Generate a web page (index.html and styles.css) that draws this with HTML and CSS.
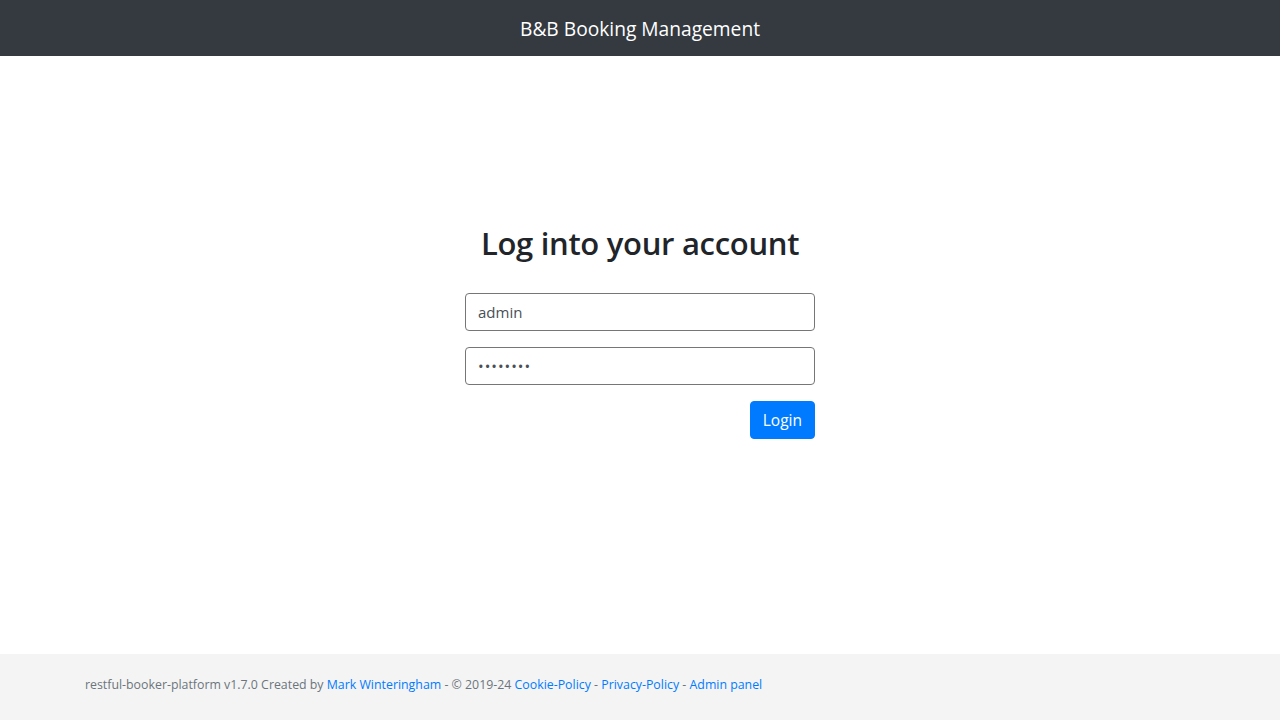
FILE: index.html
```html
<!DOCTYPE html>
<html lang="en">
<head>
<meta charset="utf-8">
<title>B&amp;B Booking Management</title>
<link rel="stylesheet" href="styles.css">
</head>
<body>
<nav class="navbar">
  <span class="brand">B&amp;B Booking Management</span>
</nav>
<main class="main">
  <div class="login">
    <h2 class="login-title">Log into your account</h2>
    <form class="login-form">
      <input class="field" type="text" value="admin" placeholder="Username">
      <input class="field field-password" type="password" value="password" placeholder="Password">
      <div class="actions">
        <button class="btn" type="button">Login</button>
      </div>
    </form>
  </div>
</main>
<footer class="footer">
  <div class="footer-inner">
    <p class="footer-text">restful-booker-platform v1.7.0 Created by <a href="#">Mark Winteringham</a> - © 2019-24 <a href="#">Cookie-Policy</a> - <a href="#">Privacy-Policy</a> - <a href="#">Admin panel</a></p>
  </div>
</footer>
</body>
</html>
```

FILE: styles.css
```css
* { box-sizing: border-box; }
html, body { margin: 0; padding: 0; }
body {
  font-family: "Open Sans", "Noto Sans", "Liberation Sans", sans-serif;
  color: #212529;
  background: #fff;
  min-height: 100vh;
  display: flex;
  flex-direction: column;
}
.navbar {
  height: 56px;
  background: #343a40;
  display: flex;
  align-items: center;
  justify-content: center;
}
.brand {
  color: #fff;
  font-size: 19.2px;
}
.main {
  flex: 1;
  display: flex;
  justify-content: center;
}
.login {
  width: 350px;
  margin-top: 169px;
}
.login-title {
  margin: 0 0 31px;
  text-align: center;
  font-size: 31px;
  font-weight: 600;
  line-height: 1.2;
  letter-spacing: -0.3px;
}
.login-form {
  display: flex;
  flex-direction: column;
  gap: 16px;
}
.field {
  height: 38px;
  width: 100%;
  padding: 6px 12px;
  border: 1px solid #767676;
  border-radius: 4px;
  font-family: inherit;
  font-size: 15px;
  color: #495057;
  background: #fff;
}
.field-password {
  letter-spacing: 1px;
}
.actions {
  display: flex;
  justify-content: flex-end;
}
.btn {
  height: 38px;
  padding: 6px 12px;
  border: 1px solid #007bff;
  border-radius: 4px;
  background: #007bff;
  color: #fff;
  font-family: inherit;
  font-size: 15.5px;
}
.footer {
  height: 66px;
  background: #f4f4f4;
  display: flex;
  align-items: center;
  padding-bottom: 6px;
}
.footer-inner {
  width: 1140px;
  margin: 0 auto;
  padding: 0 15px;
}
.footer-text {
  margin: 0;
  font-size: 12.35px;
  color: #6c757d;
}
.footer-text a {
  color: #007bff;
  text-decoration: none;
}
```
